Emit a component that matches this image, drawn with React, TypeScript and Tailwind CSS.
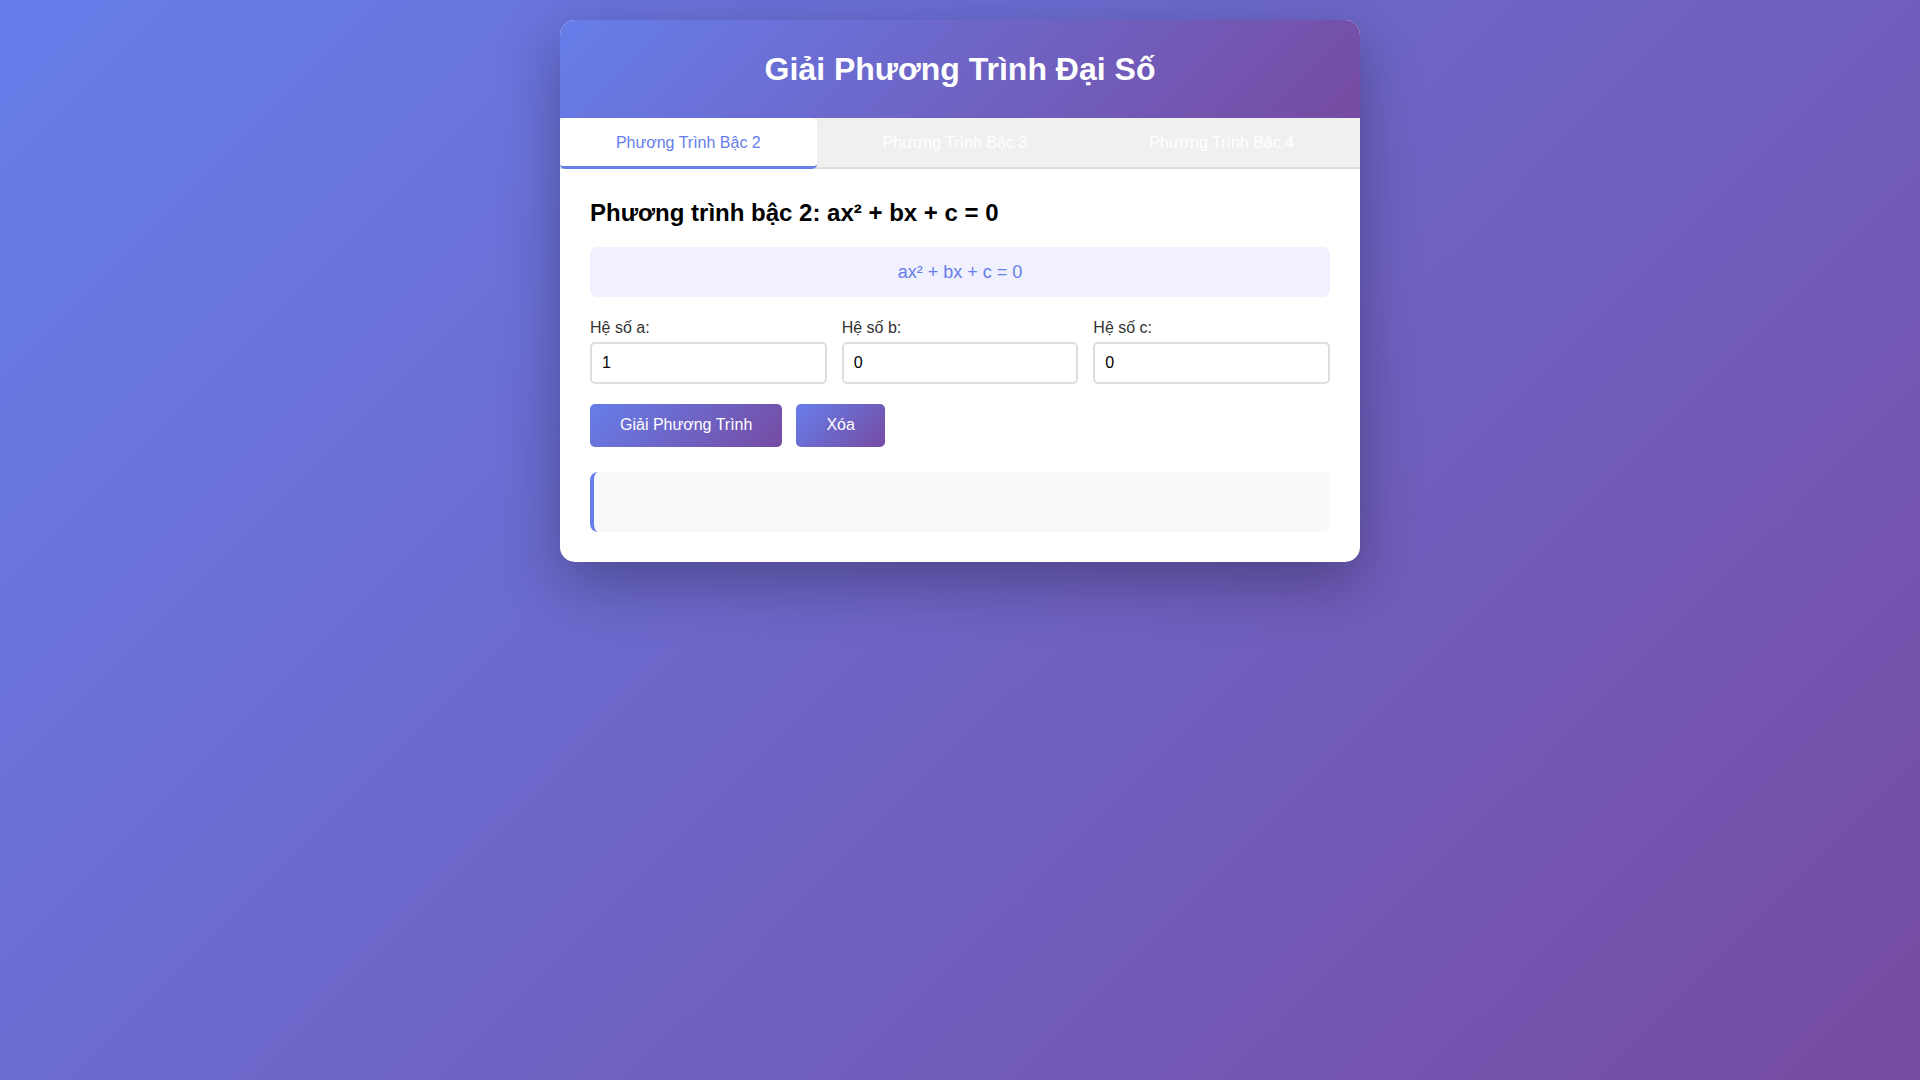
import React, { useState } from 'react';

const tabs = ['Phương Trình Bậc 2', 'Phương Trình Bậc 3', 'Phương Trình Bậc 4'];

export default function App() {
  const [active, setActive] = useState(0);
  const [a, setA] = useState('1');
  const [b, setB] = useState('0');
  const [c, setC] = useState('0');

  const fields = [
    { label: 'Hệ số a:', value: a, set: setA },
    { label: 'Hệ số b:', value: b, set: setB },
    { label: 'Hệ số c:', value: c, set: setC },
  ];

  return (
    <div className="min-h-screen bg-[linear-gradient(135deg,#667eea_0%,#764ba2_100%)] p-5 font-['Liberation_Sans',Arial,sans-serif] leading-[1.15]">
      <div className="mx-auto max-w-[800px] bg-white rounded-[15px] shadow-[0_20px_60px_rgba(0,0,0,0.3)] overflow-hidden">
        <div className="bg-[linear-gradient(135deg,#667eea_0%,#764ba2_100%)] py-[30px] text-center text-white">
          <h1 className="text-[32px] font-bold leading-[38px]">Giải Phương Trình Đại Số</h1>
        </div>

        <div className="flex bg-[#f0f0f0] border-b-2 border-[#ddd]">
          {tabs.map((tab, i) => (
            <button
              key={tab}
              onClick={() => setActive(i)}
              className={
                i === active
                  ? 'flex-1 mr-[10px] -mb-[2px] pt-[16px] pb-[14px] text-[16px] rounded-[5px] border-b-[3px] border-[#667eea] bg-white text-[#667eea] cursor-pointer'
                  : 'flex-1 mr-[10px] -mb-[2px] pt-[16px] pb-[14px] text-[16px] rounded-[5px] border-b-[3px] border-transparent bg-transparent text-white cursor-pointer'
              }
            >
              {tab}
            </button>
          ))}
        </div>

        <div className="p-[30px]">
          <h2 className="text-[24px] font-bold text-black leading-[27.6px] mb-[20px]">
            Phương trình bậc 2: ax² + bx + c = 0
          </h2>

          <div className="bg-[#f0f0ff] rounded-[8px] py-[14px] text-center text-[18px] leading-[22px] text-[#667eea] mb-[21px]">
            ax² + bx + c = 0
          </div>

          <div className="grid grid-cols-3 gap-[15px] mb-[20px]">
            {fields.map((f) => (
              <div key={f.label}>
                <label className="block mb-[5px] text-[16px] leading-[19px] text-[#333]">{f.label}</label>
                <input
                  type="number"
                  value={f.value}
                  onChange={(e) => f.set(e.target.value)}
                  className="w-full px-[10px] py-[10px] text-[16px] text-black border-2 border-[#ddd] rounded-[5px] outline-none [appearance:textfield]"
                />
              </div>
            ))}
          </div>

          <div className="flex gap-[14px]">
            <button className="px-[30px] py-[12px] text-[16px] text-white rounded-[5px] bg-[linear-gradient(135deg,#667eea_0%,#764ba2_100%)] cursor-pointer">
              Giải Phương Trình
            </button>
            <button className="px-[30px] py-[12px] text-[16px] text-white rounded-[5px] bg-[linear-gradient(135deg,#667eea_0%,#764ba2_100%)] cursor-pointer">
              Xóa
            </button>
          </div>

          <div className="mt-[25px] h-[60px] bg-[#f8f9fa] border-l-4 border-[#667eea] rounded-[8px]"></div>
        </div>
      </div>
    </div>
  );
}
